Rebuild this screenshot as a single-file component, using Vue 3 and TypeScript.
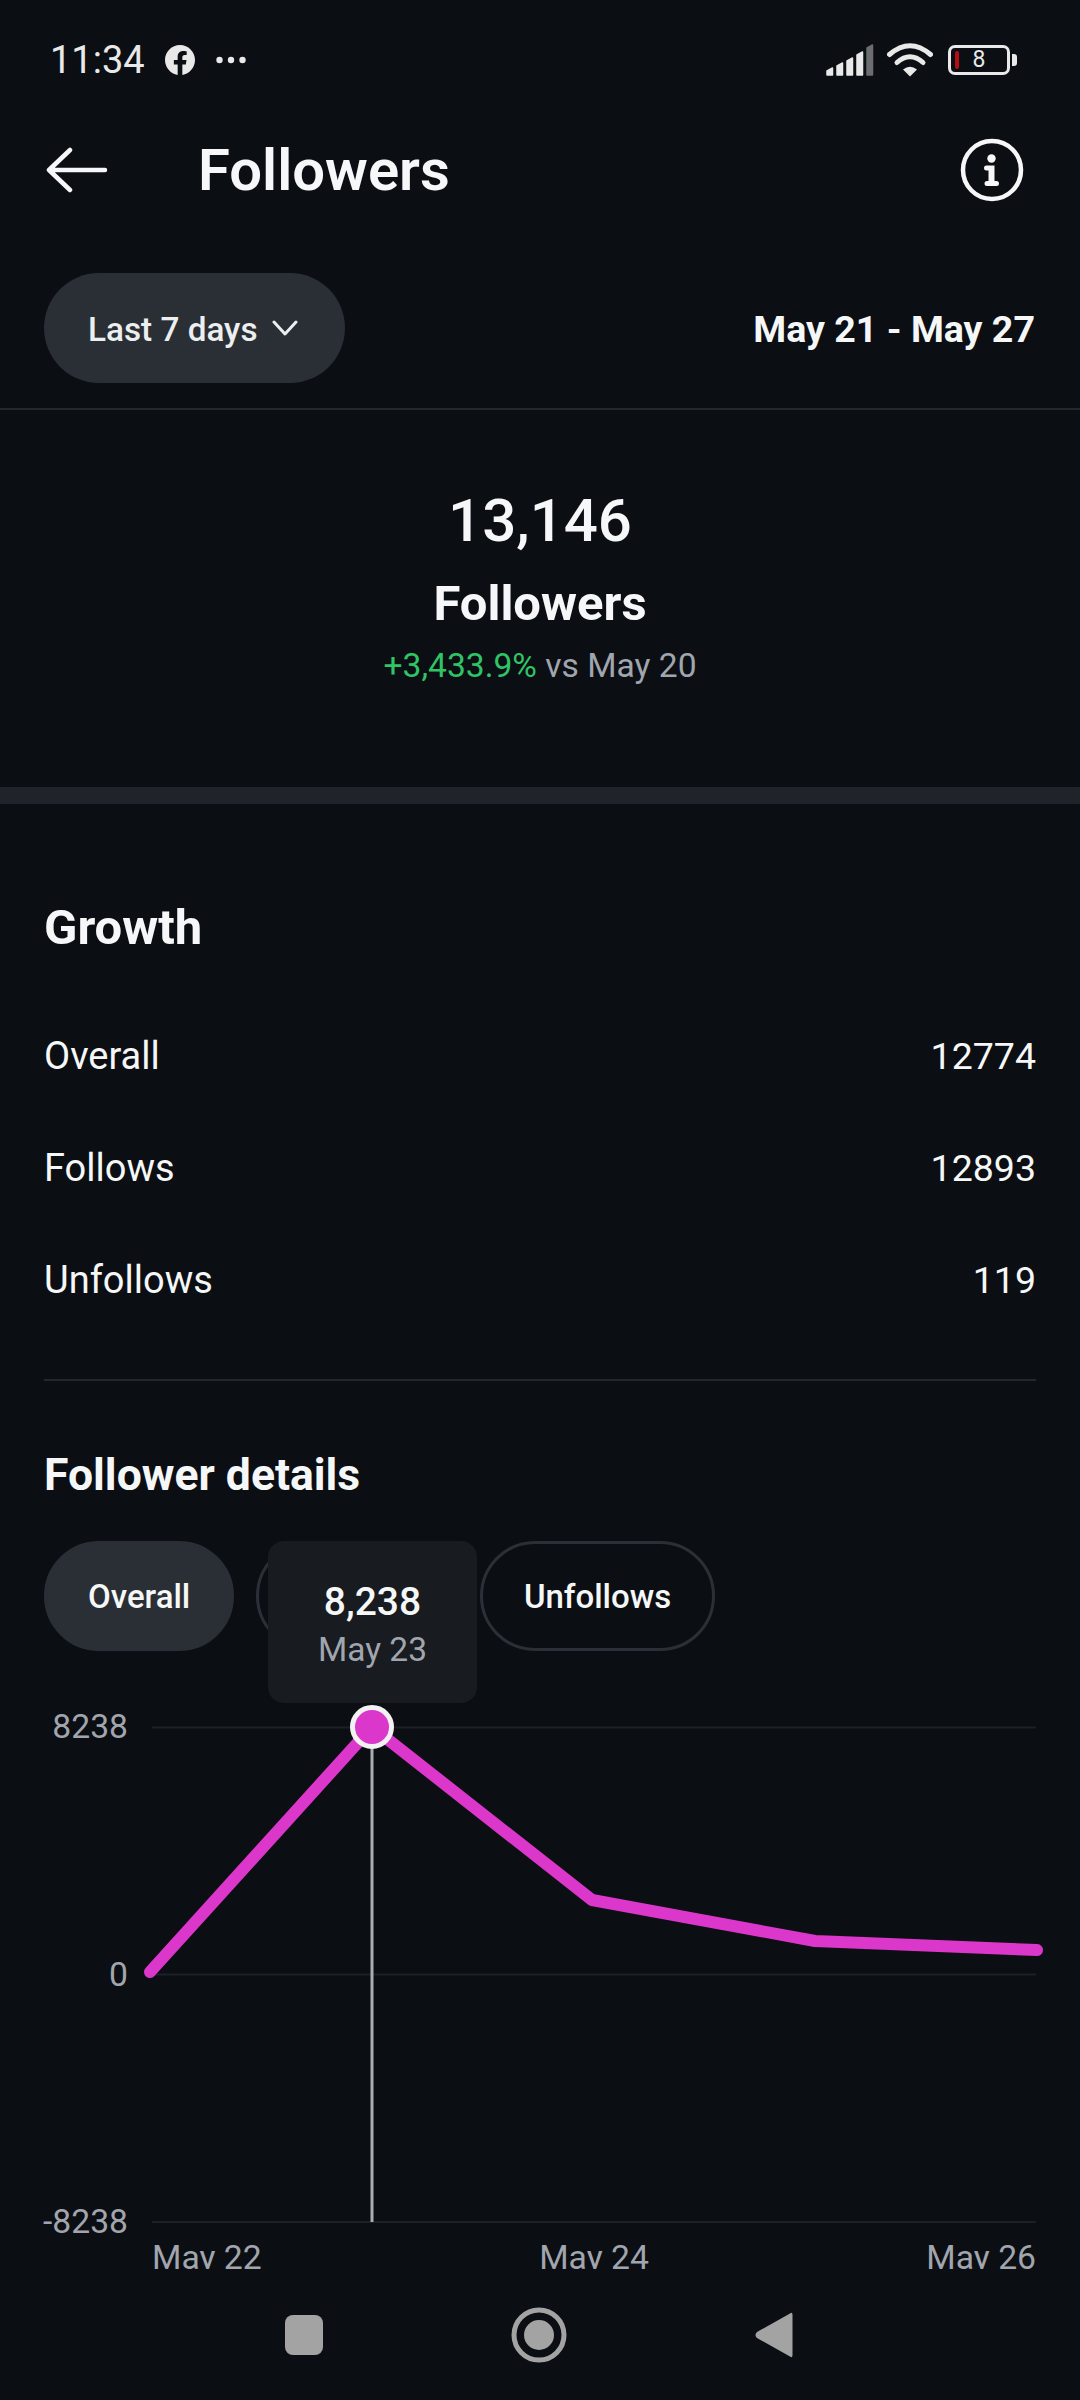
<script setup lang="ts">
const growth = [
  { label: 'Overall', value: '12774' },
  { label: 'Follows', value: '12893' },
  { label: 'Unfollows', value: '119' },
]
const tabs = ['Overall', 'Follows', 'Unfollows']
const yLabels = ['8238', '0', '-8238']
const xLabels = ['May 22', 'May 24', 'May 26']
// signal bars have a sloped top
const bars = [
  { x: 1, top: 24 },
  { x: 11, top: 19 },
  { x: 21, top: 14 },
  { x: 31, top: 8 },
  { x: 41, top: 1 },
].map((b) => `${b.x},${b.top + 3} ${b.x + 5.5},${b.top} ${b.x + 5.5},31 ${b.x},31`)
// chart points, relative to the top left of the plot
const points = '-2,245 220,0 440,173 663,214 885,223'
</script>

<template>
  <div class="screen">
    <div class="content">
      <div class="status">
        <span class="time">11:34</span>
        <svg class="fb" width="30" height="30" viewBox="0 0 24 24">
          <path
            fill="#e9e9e9"
            d="M24 12.07C24 5.4 18.63 0 12 0S0 5.4 0 12.07c0 6.03 4.39 11.02 10.13 11.93v-8.44H7.08v-3.49h3.05V9.41c0-3.02 1.79-4.69 4.53-4.69 1.31 0 2.68.24 2.68.24v2.97h-1.51c-1.49 0-1.96.93-1.96 1.89v2.25h3.33l-.53 3.49h-2.8V24C19.61 23.09 24 18.1 24 12.07z"
          />
        </svg>
        <svg class="dots" width="30" height="8" viewBox="0 0 30 8">
          <circle cx="3.500" cy="4" r="3.200" fill="#e9e9e9" />
          <circle cx="15" cy="4" r="3.200" fill="#e9e9e9" />
          <circle cx="26.500" cy="4" r="3.200" fill="#e9e9e9" />
        </svg>
        <div class="status-right">
          <svg width="48" height="32" viewBox="0 0 48 32">
            <polygon
              v-for="(b, i) in bars"
              :key="i"
              :points="b"
              :fill="i === 4 ? '#6b6d70' : '#e9e9e9'"
              :stroke="i === 4 ? '#6b6d70' : '#e9e9e9'"
              stroke-width="1.500"
              stroke-linejoin="round"
            />
          </svg>
          <svg class="wifi" width="46" height="34" viewBox="0 0 46 34" fill="none" stroke="#e9e9e9" stroke-width="5" stroke-linecap="round">
            <path d="M2.500 11.500 Q23 -6 43.500 11.500" />
            <path d="M10 19.500 Q23 8 36 19.500" />
            <path d="M23 33.500 L16 26.500 Q23 21 30 26.500 Z" fill="#e9e9e9" stroke="none" />
          </svg>
          <div class="battery">
            <div class="battery-body">
              <span class="battery-low"></span>
              <span class="battery-num">8</span>
            </div>
            <span class="battery-cap"></span>
          </div>
        </div>
      </div>

      <header class="header">
        <svg width="62" height="46" viewBox="0 0 62 46" fill="none" stroke="#f5f7f8" stroke-width="4.500" stroke-linecap="round" stroke-linejoin="round">
          <path d="M59 23H3M24 3 3 23l21 20" />
        </svg>
        <h1 class="title">Followers</h1>
        <svg class="info" width="64" height="64" viewBox="0 0 64 64">
          <circle cx="32" cy="32" r="29" fill="none" stroke="#f5f7f8" stroke-width="4.500" />
          <circle cx="31.500" cy="20.500" r="4.200" fill="#f5f7f8" />
          <path fill="#f5f7f8" d="M26.500 27.500h8V43h2a2.500 2.500 0 0 1 0 5H27a2.500 2.500 0 0 1 0-5h1.500V32.500h-2a2.500 2.500 0 0 1 0-5z" />
        </svg>
      </header>

      <div class="filter">
        <button class="range">
          <span class="range-text">Last 7 days</span>
          <svg width="26" height="16" viewBox="0 0 26 16" fill="none" stroke="#eceef0" stroke-width="3" stroke-linecap="round" stroke-linejoin="round">
            <path d="M2 2l11 12L24 2" />
          </svg>
        </button>
        <span class="dates">May 21 - May 27</span>
      </div>

      <section class="summary">
        <div class="total">13,146</div>
        <div class="total-label">Followers</div>
        <div class="change"><span class="up">+3,433.9%</span> vs May 20</div>
      </section>

      <div class="band"></div>

      <section class="growth">
        <h2 class="growth-title">Growth</h2>
        <div v-for="row in growth" :key="row.label" class="row">
          <span>{{ row.label }}</span>
          <span class="row-value">{{ row.value }}</span>
        </div>
      </section>

      <section class="details">
        <h2 class="details-title">Follower details</h2>
        <div class="tabs">
          <button v-for="(t, i) in tabs" :key="t" class="tab" :class="{ active: i === 0 }">{{ t }}</button>
        </div>

        <div class="chart">
          <div class="y-axis">
            <span v-for="y in yLabels" :key="y">{{ y }}</span>
          </div>
          <div class="plot">
            <svg class="plot-svg" width="884" height="496" viewBox="0 0 884 496">
              <line x1="0" y1="0.500" x2="884" y2="0.500" stroke="#1d2127" stroke-width="2" />
              <line x1="0" y1="247.500" x2="884" y2="247.500" stroke="#1d2127" stroke-width="2" />
              <line x1="0" y1="495" x2="884" y2="495" stroke="#1d2127" stroke-width="2" />
              <line x1="220" y1="0" x2="220" y2="495" stroke="#a9adb5" stroke-width="3" />
              <polyline :points="points" fill="none" stroke="#db37cb" stroke-width="12" stroke-linejoin="round" stroke-linecap="round" />
              <circle cx="220" cy="0" r="19.500" fill="#db37cb" stroke="#f2f2f2" stroke-width="5" />
            </svg>
            <div class="tip">
              <div class="tip-value">8,238</div>
              <div class="tip-date">May 23</div>
            </div>
            <div class="x-axis">
              <span v-for="x in xLabels" :key="x">{{ x }}</span>
            </div>
          </div>
        </div>
      </section>
    </div>

    <nav class="nav">
      <span class="nav-square"></span>
      <svg width="56" height="56" viewBox="0 0 56 56">
        <circle cx="28" cy="28" r="25" fill="none" stroke="#a3a3a3" stroke-width="5" />
        <circle cx="28" cy="28" r="15" fill="#a3a3a3" />
      </svg>
      <svg width="38" height="46" viewBox="0 0 38 46">
        <path fill="#a3a3a3" d="M35 1.500c1.500-1.300 2.500-.5 2.500 1.500v40c0 2-1 2.800-2.500 1.500L2 26c-2-1.800-2-4.200 0-6z" />
      </svg>
    </nav>
  </div>
</template>

<style>
html,
body {
  margin: 0;
  background: #0b0e13;
}
</style>

<style scoped>
.screen {
  width: 1080px;
  height: 2400px;
  display: flex;
  flex-direction: column;
  overflow: hidden;
  background: #0b0e13;
  color: #f5f7f8;
  font-family: Roboto, "Noto Sans", sans-serif;
}

.content {
  flex: 1;
  min-height: 0;
  overflow: hidden;
}

.status {
  height: 120px;
  display: flex;
  align-items: center;
  padding: 0 63px 0 50px;
  color: #e9e9e9;
}

.time {
  font-size: 38px;
}

.fb {
  margin-left: 20px;
}

.dots {
  margin-left: 21px;
}

.status-right {
  margin-left: auto;
  display: flex;
  align-items: center;
}

.wifi {
  margin-left: 13px;
}

.battery {
  display: flex;
  align-items: center;
  margin-left: 15px;
}

.battery-body {
  position: relative;
  width: 62px;
  height: 30px;
  box-sizing: border-box;
  border: 3px solid #e9e9e9;
  border-radius: 7px;
  display: flex;
  align-items: center;
  justify-content: center;
}

.battery-low {
  position: absolute;
  left: 4px;
  top: 3px;
  bottom: 3px;
  width: 4px;
  border-radius: 2px;
  background: #b30f12;
}

.battery-num {
  font-size: 23px;
  line-height: 24px;
}

.battery-cap {
  width: 5px;
  height: 12px;
  margin-left: 2px;
  border-radius: 0 3px 3px 0;
  background: #e9e9e9;
}

.header {
  height: 100px;
  display: flex;
  align-items: center;
  padding: 0 56px 0 46px;
}

.title {
  margin: 0 0 0 90px;
  font-size: 58px;
  font-weight: 600;
  line-height: 64px;
}

.info {
  margin-left: auto;
}

.filter {
  display: flex;
  align-items: center;
  justify-content: space-between;
  padding: 53px 45px 25px 44px;
  border-bottom: 2px solid #24282e;
}

.range {
  height: 110px;
  width: 301px;
  padding: 0 0 0 44px;
  display: flex;
  align-items: center;
  gap: 14px;
  border: 0;
  border-radius: 55px;
  background: #2a2e35;
  color: #eceef0;
  font: 500 33.300px Roboto, sans-serif;
}

.range-text {
  padding-top: 2px;
}

.dates {
  margin-top: 2px;
  font-size: 37.600px;
  font-weight: 700;
}

.summary {
  padding: 76px 0 99px;
  text-align: center;
}

.total {
  font-size: 60px;
  font-weight: 500;
  line-height: 70px;
}

.total-label {
  margin-top: 18px;
  font-size: 49px;
  font-weight: 700;
  line-height: 60px;
}

.change {
  margin-top: 10px;
  font-size: 33.600px;
  line-height: 44px;
  color: #a1a5ad;
}

.up {
  color: #2fc466;
}

.band {
  height: 17px;
  background: #20242a;
}

.growth {
  margin: 0 44px;
  padding-top: 94px;
  padding-bottom: 43px;
  border-bottom: 2px solid #24282e;
}

.growth-title {
  margin: 0 0 42px;
  font-size: 49px;
  font-weight: 700;
  line-height: 60px;
}

.row {
  height: 112px;
  display: flex;
  align-items: center;
  justify-content: space-between;
  font-size: 38px;
}

.row-value {
  font-size: 37.500px;
}

.details {
  padding: 65px 44px 0;
}

.details-title {
  margin: 0 0 39px;
  font-size: 44.500px;
  font-weight: 700;
  line-height: 58px;
}

.tabs {
  display: flex;
  gap: 22px;
  margin-top: -2px;
}

.tab {
  height: 110px;
  padding: 0 41px;
  border: 3px solid #2c3036;
  border-radius: 55px;
  background: transparent;
  color: #f5f7f8;
  font: 500 33px Roboto, sans-serif;
}

.tab.active {
  border-color: #2a2e35;
  background: #2a2e35;
}

.chart {
  display: grid;
  grid-template-columns: 108px 884px;
  margin-top: 76px;
}

.y-axis {
  height: 539px;
  margin-top: -22px;
  padding-right: 24px;
  display: flex;
  flex-direction: column;
  justify-content: space-between;
  align-items: flex-end;
  font-size: 33.700px;
  line-height: 44px;
  color: #a1a5ad;
}

.plot {
  position: relative;
}

.plot-svg {
  display: block;
  overflow: visible;
}

.tip {
  position: absolute;
  left: 116px;
  top: -186px;
  width: 209px;
  height: 162px;
  border-radius: 16px;
  background: #181b1f;
  text-align: center;
}

.tip-value {
  margin-top: 39px;
  font-size: 39px;
  font-weight: 500;
  line-height: 44px;
}

.tip-date {
  margin-top: 4px;
  font-size: 33.500px;
  line-height: 44px;
  color: #a1a5ad;
}

.x-axis {
  display: flex;
  justify-content: space-between;
  margin-top: 13px;
  font-size: 33.700px;
  line-height: 44px;
  color: #a1a5ad;
}

.nav {
  flex: none;
  height: 131px;
  padding-right: 3px;
  display: flex;
  align-items: center;
  justify-content: center;
  gap: 188px;
  background: #0b0e13;
}

.nav-square {
  width: 38px;
  height: 40px;
  border-radius: 8px;
  background: #a3a3a3;
}
</style>
